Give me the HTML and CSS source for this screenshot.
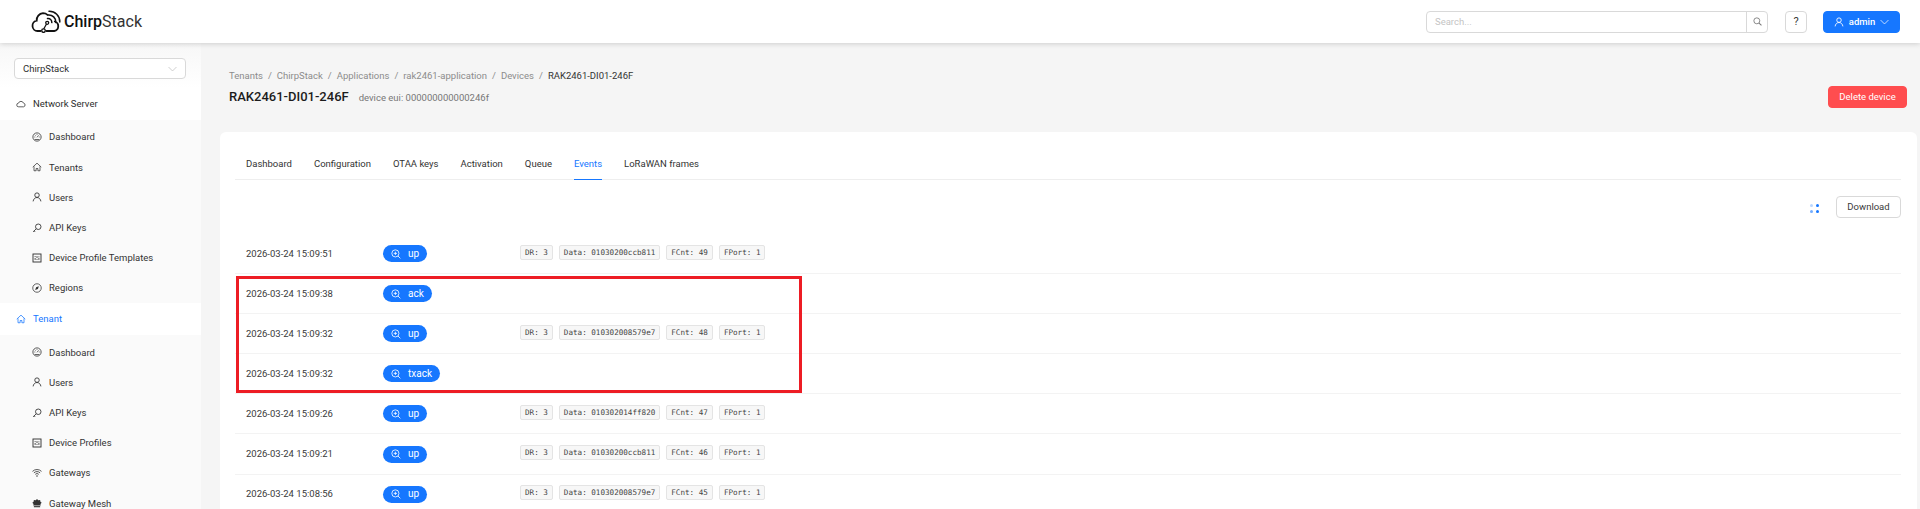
FILE: index.html
```
<!DOCTYPE html>
<html lang="en">
<head>
<meta charset="utf-8">
<title>ChirpStack</title>
<link rel="stylesheet" href="styles.css">
</head>
<body>
<svg class="defs" width="0" height="0" aria-hidden="true">
  <symbol id="i-cloud" viewBox="0 0 16 16"><path d="M4.3 12.5a2.9 2.9 0 0 1-.4-5.8A4.3 4.3 0 0 1 12 6.6a3 3 0 0 1 .1 5.9z" fill="none" stroke="currentColor" stroke-width="1.2"/></symbol>
  <symbol id="i-dash" viewBox="0 0 16 16"><circle cx="8" cy="8" r="6.6" fill="none" stroke="currentColor" stroke-width="1.3"/><path d="M8 8.5 10.6 5.4M3.8 8h1.4M11 8h1.3M8 3.6v1.3M5 5l.9.9" fill="none" stroke="currentColor" stroke-width="1.2"/><path d="M4.5 12h7" stroke="currentColor" stroke-width="1.2"/></symbol>
  <symbol id="i-home" viewBox="0 0 16 16"><path d="M1.2 8.2 8 1.8l6.8 6.4M3.2 7v7h3.4v-3.600h2.800V14h3.400V7" fill="none" stroke="currentColor" stroke-width="1.2" stroke-linejoin="round"/></symbol>
  <symbol id="i-user" viewBox="0 0 16 16"><circle cx="8" cy="5" r="3.6" fill="none" stroke="currentColor" stroke-width="1.4"/><path d="M1.8 15c.3-3.4 2.900-6.200 6.200-6.200s5.900 2.800 6.200 6.200" fill="none" stroke="currentColor" stroke-width="1.4"/></symbol>
  <symbol id="i-key" viewBox="0 0 16 16"><circle cx="10" cy="6" r="4.4" fill="none" stroke="currentColor" stroke-width="1.4"/><path d="M6.800 9.200 1.800 14.200M3.400 12.600l1.600 1.600" fill="none" stroke="currentColor" stroke-width="1.4"/></symbol>
  <symbol id="i-prof" viewBox="0 0 16 16"><rect x="1.600" y="1.600" width="12.800" height="12.800" fill="none" stroke="currentColor" stroke-width="1.5"/><path d="M5 11V8M5 6.500V5M8 11V9.500M8 8V5M11 11V7.500M11 6V5" stroke="currentColor" stroke-width="1.400" fill="none"/></symbol>
  <symbol id="i-compass" viewBox="0 0 16 16"><circle cx="8" cy="8" r="6.800" fill="none" stroke="currentColor" stroke-width="1.2"/><path d="M5 11l1.600-4.400L11 5 9.400 9.400z" fill="currentColor"/></symbol>
  <symbol id="i-wifi" viewBox="0 0 16 16"><path d="M.8 5.400a10.300 10.300 0 0 1 14.400 0M3 7.800a7.100 7.100 0 0 1 10 0M5.200 10.100a4 4 0 0 1 5.600 0" fill="none" stroke="currentColor" stroke-width="1.300"/><circle cx="8" cy="12.600" r="1.200" fill="currentColor"/></symbol>
  <symbol id="i-mesh" viewBox="0 0 16 16"><path d="M8 1.500l2 2 3-.5.500 3 2 1.500-2 2 .5 2.500H2l.5-2.500-2-2 2-1.500.5-3 3 .5z" fill="currentColor"/><rect x="3" y="13" width="10" height="1.800" fill="currentColor"/></symbol>
  <symbol id="i-zoom" viewBox="0 0 16 16"><circle cx="7" cy="7" r="5.700" fill="none" stroke="currentColor" stroke-width="1.300"/><path d="M11.200 11.200 15 15M7 4.400v5.200M4.400 7h5.200" fill="none" stroke="currentColor" stroke-width="1.300"/></symbol>
  <symbol id="i-search" viewBox="0 0 16 16"><circle cx="6.800" cy="6.800" r="5.300" fill="none" stroke="currentColor" stroke-width="1.500"/><path d="M10.800 10.800 15 15" fill="none" stroke="currentColor" stroke-width="1.800"/></symbol>
  <symbol id="i-down" viewBox="0 0 16 10"><path d="M1 1.500 8 8.500l7-7" fill="none" stroke="currentColor" stroke-width="1.300"/></symbol>
</svg>

<header class="topbar">
  <div class="brand">
    <svg class="logo" viewBox="0 0 30 23" aria-hidden="true">
      <path d="M9.500 21H6.500a5.200 5.200 0 0 1-.8-10.300A6.900 6.900 0 0 1 12 3.200c1.700 0 3.300.6 4.500 1.700M23.800 11.500a4.900 4.900 0 0 1-.6 9.500H15.500" fill="none" stroke="#111" stroke-width="1.800" stroke-linecap="round"/>
      <path d="M18 1.200a10.500 10.500 0 0 1 10.800 10.800M17 5a7 7 0 0 1 7.800 7.500M16.500 8.600a3.700 3.700 0 0 1 4.300 4" fill="none" stroke="#111" stroke-width="1.500" stroke-linecap="round"/>
      <path d="M15.500 14 12.700 19" stroke="#111" stroke-width="1.300" fill="none"/>
      <circle cx="16.200" cy="12.800" r="1.500" fill="none" stroke="#111" stroke-width="1.300"/>
      <circle cx="12.500" cy="20.600" r="1.800" fill="#fff" stroke="#111" stroke-width="1.300"/>
    </svg>
    <span class="wordmark"><b>Chirp</b>Stack</span>
  </div>
  <div class="top-actions">
    <div class="search">
      <span class="search-input">Search...</span>
      <span class="search-btn"><svg class="ic-search"><use href="#i-search"/></svg></span>
    </div>
    <button class="btn help">?</button>
    <button class="btn primary admin"><svg class="ic"><use href="#i-user"/></svg>admin<svg class="ic-down"><use href="#i-down"/></svg></button>
  </div>
</header>

<div class="shell">
  <aside class="sidebar">
    <div class="select-wrap">
      <div class="select"><span>ChirpStack</span><svg class="ic-down muted"><use href="#i-down"/></svg></div>
    </div>
    <nav class="menu">
      <div class="group"><svg class="ic"><use href="#i-cloud"/></svg>Network Server</div>
      <div class="sub">
        <a class="item"><svg class="ic"><use href="#i-dash"/></svg>Dashboard</a>
        <a class="item"><svg class="ic"><use href="#i-home"/></svg>Tenants</a>
        <a class="item"><svg class="ic"><use href="#i-user"/></svg>Users</a>
        <a class="item"><svg class="ic"><use href="#i-key"/></svg>API Keys</a>
        <a class="item"><svg class="ic"><use href="#i-prof"/></svg>Device Profile Templates</a>
        <a class="item"><svg class="ic"><use href="#i-compass"/></svg>Regions</a>
      </div>
      <div class="group active"><svg class="ic"><use href="#i-home"/></svg>Tenant</div>
      <div class="sub">
        <a class="item"><svg class="ic"><use href="#i-dash"/></svg>Dashboard</a>
        <a class="item"><svg class="ic"><use href="#i-user"/></svg>Users</a>
        <a class="item"><svg class="ic"><use href="#i-key"/></svg>API Keys</a>
        <a class="item"><svg class="ic"><use href="#i-prof"/></svg>Device Profiles</a>
        <a class="item"><svg class="ic"><use href="#i-wifi"/></svg>Gateways</a>
        <a class="item"><svg class="ic"><use href="#i-mesh"/></svg>Gateway Mesh</a>
      </div>
    </nav>
  </aside>

  <main class="content">
    <section class="page-head">
      <div class="head-left">
        <ol class="crumbs">
          <li>Tenants</li><li class="sep">/</li><li>ChirpStack</li><li class="sep">/</li><li>Applications</li><li class="sep">/</li><li>rak2461-application</li><li class="sep">/</li><li>Devices</li><li class="sep">/</li><li class="cur">RAK2461-DI01-246F</li>
        </ol>
        <div class="title-row"><h1>RAK2461-DI01-246F</h1><span class="subtitle">device eui: 000000000000246f</span></div>
      </div>
      <button class="btn danger">Delete device</button>
    </section>

    <section class="card">
      <div class="tabs">
        <a class="tab">Dashboard</a>
        <a class="tab">Configuration</a>
        <a class="tab">OTAA keys</a>
        <a class="tab">Activation</a>
        <a class="tab">Queue</a>
        <a class="tab on">Events</a>
        <a class="tab">LoRaWAN frames</a>
      </div>
      <div class="tools">
        <span class="spin"><i></i><i></i><i></i><i></i></span>
        <button class="btn download">Download</button>
      </div>
      <div class="events">
        <div class="row">
          <span class="time">2026-03-24 15:09:51</span>
          <span class="pill-cell"><span class="pill"><svg class="ic-zoom"><use href="#i-zoom"/></svg>up</span></span>
          <span class="tags"><code>DR: 3</code><code>Data: 01030200ccb811</code><code>FCnt: 49</code><code>FPort: 1</code></span>
        </div>
        <div class="marked">
          <div class="row">
            <span class="time">2026-03-24 15:09:38</span>
            <span class="pill-cell"><span class="pill"><svg class="ic-zoom"><use href="#i-zoom"/></svg>ack</span></span>
          </div>
          <div class="row">
            <span class="time">2026-03-24 15:09:32</span>
            <span class="pill-cell"><span class="pill"><svg class="ic-zoom"><use href="#i-zoom"/></svg>up</span></span>
            <span class="tags"><code>DR: 3</code><code>Data: 010302008579e7</code><code>FCnt: 48</code><code>FPort: 1</code></span>
          </div>
          <div class="row">
            <span class="time">2026-03-24 15:09:32</span>
            <span class="pill-cell"><span class="pill"><svg class="ic-zoom"><use href="#i-zoom"/></svg>txack</span></span>
          </div>
          <div class="redbox"></div>
        </div>
        <div class="row">
          <span class="time">2026-03-24 15:09:26</span>
          <span class="pill-cell"><span class="pill"><svg class="ic-zoom"><use href="#i-zoom"/></svg>up</span></span>
          <span class="tags"><code>DR: 3</code><code>Data: 010302014ff820</code><code>FCnt: 47</code><code>FPort: 1</code></span>
        </div>
        <div class="row">
          <span class="time">2026-03-24 15:09:21</span>
          <span class="pill-cell"><span class="pill"><svg class="ic-zoom"><use href="#i-zoom"/></svg>up</span></span>
          <span class="tags"><code>DR: 3</code><code>Data: 01030200ccb811</code><code>FCnt: 46</code><code>FPort: 1</code></span>
        </div>
        <div class="row">
          <span class="time">2026-03-24 15:08:56</span>
          <span class="pill-cell"><span class="pill"><svg class="ic-zoom"><use href="#i-zoom"/></svg>up</span></span>
          <span class="tags"><code>DR: 3</code><code>Data: 010302008579e7</code><code>FCnt: 45</code><code>FPort: 1</code></span>
        </div>
      </div>
    </section>
  </main>
</div>
</body>
</html>
```

FILE: styles.css
```
* { box-sizing: border-box; }
html, body { margin: 0; height: 100%; }
body {
  display: flex;
  flex-direction: column;
  height: 100vh;
  overflow: hidden;
  background: #f5f5f5;
  color: #2e2e2e;
  font-family: Roboto, "Noto Sans", sans-serif;
  font-size: 9.5px;
  line-height: 1.4;
}
.defs { display: block; height: 0; }
.ic { width: 10px; height: 10px; flex: none; }
.ic-down { width: 9px; height: 6px; flex: none; }
.ic-search { width: 9px; height: 9px; }
.ic-zoom { width: 10px; height: 10px; flex: none; }
.muted { color: #bdbdbd; }

.topbar {
  position: relative;
  z-index: 2;
  flex: none;
  height: 43px;
  background: #fff;
  box-shadow: 0 1px 5px rgba(0,0,0,.16);
  display: flex;
  align-items: center;
  justify-content: space-between;
  padding: 0 20px 0 31px;
}
.brand { display: flex; align-items: center; gap: 3px; }
.logo { width: 30px; height: 23px; }
.wordmark { font-size: 16px; color: #333; line-height: 1; }
.wordmark b { font-weight: 500; color: #111; }
.top-actions { display: flex; align-items: center; }
.search { display: flex; width: 342px; height: 22px; margin-right: 17px; background: #fff; border: 1px solid #d9d9d9; border-radius: 4px; }
.search-input { flex: 1; padding-left: 8px; color: #c4c4c4; line-height: 20px; }
.search-btn { width: 21px; border-left: 1px solid #d9d9d9; display: flex; align-items: center; justify-content: center; color: #777; }
.btn {
  font: inherit;
  height: 22px;
  padding: 0 10px;
  background: #fff;
  color: #3a3a3a;
  border: 1px solid #d9d9d9;
  border-radius: 4px;
  line-height: 1;
}
.help { width: 22px; padding: 0; margin-right: 16px; font-size: 11px; }
.primary { background: #1677ff; border-color: #1677ff; color: #fff; }
.admin { width: 77px; padding: 0; display: flex; align-items: center; justify-content: center; gap: 5px; font-weight: 500; }
.danger { background: #ff4d4f; border-color: #ff4d4f; color: #fff; width: 79px; padding: 0; margin-top: 17px; }
.download { width: 65px; padding: 0; }

.shell { flex: 1; min-height: 0; display: flex; }
.sidebar { flex: none; width: 201px; background: #fafafa; overflow: hidden; }
.select-wrap { height: 45px; padding: 15px 15px 0 14px; background: linear-gradient(#f7f7f7, #fff); }
.select {
  height: 21px;
  background: #fff;
  border: 1px solid #d9d9d9;
  border-radius: 4px;
  padding: 0 8px;
  display: flex;
  align-items: center;
  justify-content: space-between;
}
.group { height: 32px; background: #fff; padding-left: 16px; display: flex; align-items: center; gap: 7px; }
.group.active { color: #1677ff; }
.sub { padding: 2px 0 0; }
.item { height: 30.2px; padding-left: 32px; display: flex; align-items: center; gap: 7px; color: #333; }

.content { flex: 1; min-width: 0; display: flex; flex-direction: column; padding: 0 3px 0 19px; }
.page-head { flex: none; height: 89px; padding: 26px 10px 0 9px; display: flex; justify-content: space-between; align-items: flex-start; }
.crumbs { list-style: none; margin: 0; padding: 0; display: flex; gap: 5px; color: #8c8c8c; height: 14px; align-items: center; }
.crumbs .cur { color: #333; }
.title-row { display: flex; align-items: baseline; gap: 10px; margin-top: 6px; }
h1 { margin: 0; font-size: 13px; font-weight: 500; color: #1c1c1c; line-height: 16px; }
.subtitle { color: #777; }

.card { flex: 1; min-height: 0; background: #fff; border-radius: 6px 6px 0 0; padding: 0 16px 0 15px; }
.tabs { height: 48px; display: flex; gap: 22px; align-items: stretch; padding: 0 11px; border-bottom: 1px solid #eee; }
.tab { display: flex; align-items: center; padding-top: 17px; border-bottom: 1px solid transparent; margin-bottom: -1px; color: #333; }
.tab.on { color: #1677ff; border-bottom-color: #1677ff; }
.tools { height: 54px; padding-top: 16px; display: flex; justify-content: flex-end; align-items: flex-start; gap: 17px; }
.spin { margin-top: 8px; width: 9px; height: 9px; display: grid; grid-template-columns: 3px 3px; gap: 3px; }
.spin i { border-radius: 50%; background: #1677ff; }
.spin i:first-child { opacity: .3; }
.spin i:nth-child(3) { opacity: .6; }
.events { position: relative; }
.row { height: 40.1px; padding-left: 11px; border-bottom: 1px solid #f3f3f3; display: flex; align-items: center; }
.time { width: 137px; flex: none; color: #3a3a3a; }
.pill-cell { width: 137px; flex: none; display: flex; }
.pill {
  height: 17px;
  background: #1677ff;
  color: #fff;
  border-radius: 9px;
  padding: 0 8px;
  display: inline-flex;
  align-items: center;
  gap: 7px;
  font-size: 10px;
}
.tags { display: flex; gap: 6px; margin-top: -3px; }
code {
  font-family: "DejaVu Sans Mono", "Liberation Mono", monospace;
  font-size: 7.6px;
  line-height: 13px;
  height: 15px;
  padding: 0 4px;
  background: #f7f7f7;
  border: 1px solid #e4e4e4;
  border-radius: 2px;
  color: #444;
  white-space: nowrap;
}
.marked { position: relative; }
.redbox { position: absolute; left: 1px; top: 2px; height: 117px; width: 566px; border: 3px solid #ed1c24; pointer-events: none; }
```
